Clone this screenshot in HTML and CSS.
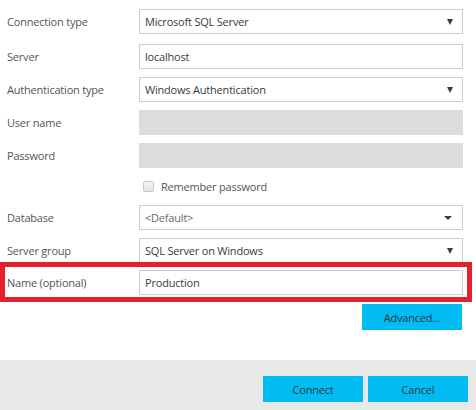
FILE: index.html
```html
<!DOCTYPE html>
<html>
<head>
<meta charset="utf-8">
<link rel="stylesheet" href="styles.css">
</head>
<body>
<div class="dialog">
  <div class="form">
    <div class="row first">
      <label class="label">Connection type</label>
      <div class="field select"><span class="value">Microsoft SQL Server</span><span class="arrow"></span></div>
    </div>
    <div class="row">
      <label class="label">Server</label>
      <div class="field"><span class="value">localhost</span></div>
    </div>
    <div class="row">
      <label class="label">Authentication type</label>
      <div class="field select"><span class="value">Windows Authentication</span><span class="arrow"></span></div>
    </div>
    <div class="row">
      <label class="label">User name</label>
      <div class="field disabled"></div>
    </div>
    <div class="row">
      <label class="label">Password</label>
      <div class="field disabled"></div>
    </div>
    <div class="row check-row">
      <span class="label"></span>
      <label class="check"><span class="box"></span><span>Remember password</span></label>
    </div>
    <div class="row">
      <label class="label">Database</label>
      <div class="field select"><span class="value placeholder">&lt;Default&gt;</span><span class="caret"></span></div>
    </div>
    <div class="row">
      <label class="label">Server group</label>
      <div class="field select"><span class="value">SQL Server on Windows</span><span class="arrow"></span></div>
    </div>
    <div class="row highlighted">
      <label class="label">Name (optional)</label>
      <div class="field"><span class="value">Production</span></div>
    </div>
    <div class="advanced-row">
      <button class="btn">Advanced...</button>
    </div>
  </div>
  <div class="footer">
    <button class="btn">Connect</button>
    <button class="btn">Cancel</button>
  </div>
</div>
</body>
</html>
```

FILE: styles.css
```css
html, body {
  margin: 0;
  padding: 0;
  background: #ffffff;
}
body {
  font-family: "Open Sans", "Noto Sans", sans-serif;
  font-size: 11px;
  letter-spacing: -0.2px;
  color: #505050;
}
.dialog {
  width: 476px;
  height: 410px;
  display: flex;
  flex-direction: column;
}
.form {
  padding-top: 9px;
  display: flex;
  flex-direction: column;
}
.row {
  display: grid;
  grid-template-columns: 132px 324px;
  align-items: center;
  padding-left: 7px;
  margin-top: 8px;
}
.row.first {
  margin-top: 0;
  margin-bottom: 2px;
}
.label {
  color: #555555;
  white-space: nowrap;
}
.field {
  box-sizing: border-box;
  height: 25px;
  border: 1px solid #cccccc;
  background: #ffffff;
  display: flex;
  align-items: center;
  padding: 0 5px;
  color: #3a3a3a;
}
.field.disabled {
  border: none;
  background: #dcdcdc;
}
.value {
  flex: 1;
  white-space: nowrap;
}
.placeholder {
  color: #6a6a6a;
}
.arrow {
  width: 0;
  height: 0;
  border-left: 3.5px solid transparent;
  border-right: 3.5px solid transparent;
  border-top: 6px solid #3c3c3c;
  margin-right: 4px;
}
.caret {
  width: 0;
  height: 0;
  border-left: 4px solid transparent;
  border-right: 4px solid transparent;
  border-top: 4px solid #3c3c3c;
  margin-right: 5px;
}
.check-row {
  height: 21px;
}
.check {
  display: flex;
  align-items: center;
  gap: 7px;
  padding-left: 4px;
  color: #555555;
}
.box {
  box-sizing: border-box;
  width: 11px;
  height: 11px;
  border: 1px solid #c9c9c9;
  border-radius: 2px;
  background: linear-gradient(#f4f4f4, #e2e2e2);
}
.highlighted {
  align-self: flex-start;
  margin: 4px 0 0 5px;
  padding: 3px 4px 2px 2px;
  outline: 5px solid #e3202b;
}
.advanced-row {
  display: flex;
  justify-content: flex-end;
  padding-right: 14px;
  margin-top: 7px;
}
.btn {
  box-sizing: border-box;
  width: 100px;
  height: 26px;
  border: none;
  background: #00bcf2;
  color: #2b3a44;
  font-family: "Open Sans", "Noto Sans", sans-serif;
  font-size: 11px;
  letter-spacing: -0.2px;
  padding: 0;
}
.footer {
  margin-top: 30px;
  flex: 1;
  background: #e9e9e9;
  display: flex;
  justify-content: flex-end;
  align-items: flex-start;
  gap: 5px;
  padding: 16px 8px 0 0;
}
```
